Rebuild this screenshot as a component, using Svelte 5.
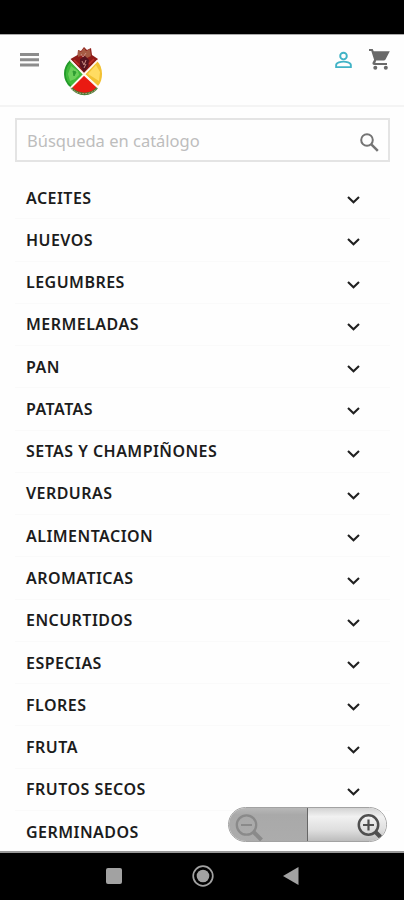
<script>
  const categories = [
    "ACEITES",
    "HUEVOS",
    "LEGUMBRES",
    "MERMELADAS",
    "PAN",
    "PATATAS",
    "SETAS Y CHAMPIÑONES",
    "VERDURAS",
    "ALIMENTACION",
    "AROMATICAS",
    "ENCURTIDOS",
    "ESPECIAS",
    "FLORES",
    "FRUTA",
    "FRUTOS SECOS",
    "GERMINADOS",
  ];
  let query = "";
</script>

<div class="phone">
  <div class="status-bar"></div>

  <header>
    <button class="menu" aria-label="Menú">
      <svg width="19" height="14" viewBox="0 0 19 14" fill="#8c8c8c">
        <path d="M0 0h19v3H0zM0 5.3h19v3H0zM0 10.6h19v3H0z" />
      </svg>
    </button>
    <svg class="logo" width="40" height="50" viewBox="0 0 40 50">
      <path d="M6.500 14C-1.500 21-1.500 33 7 40L19.500 27z" fill="#3fb93a" />
      <path d="M6.500 14C-1 21-1 33 7 39.500" fill="none" stroke="#229a2a" stroke-width="1.800" />
      <path d="M7 19l7 5 1 4-4 4-5 2-2-7z" fill="#7fd968" opacity=".7" />
      <path d="M9 24l3 1-2 4zM12 20l3 4" fill="#2e9c32" stroke="#2e9c32" />
      <path d="M33 14C39.500 20 39.500 33 34 39L21 27z" fill="#f2c132" />
      <path d="M32 18l4 7-1 9-11-7z" fill="#ffdc62" />
      <path d="M6.500 41L20 27.500 34 41C28 50.500 13 50.500 6.500 41z" fill="#3f7c31" />
      <path d="M8 40L20 28l12.500 12C27 47.500 14 47.500 8 40z" fill="#ea1a12" />
      <path d="M7.500 41.500C14 48.500 27 48.500 33 41.500" fill="none" stroke="#dba38d" stroke-width=".8" stroke-dasharray="2 1" />
      <path d="M6.500 12l7-4 .5-5 3 1 3-4 3 3 4-2 1 7 6 4-14 14z" fill="#8f1b18" />
      <path d="M14 3l3 2 3-4 2 3 4-2 1 7-4 2-4-3-5 2z" fill="#a65b43" />
      <path d="M16 12l5-3 4 4-1 7-4 5-4-6z" fill="#571420" />
      <path d="M18 14l2 4 2-5M20 21l2-4M17 7l2 3 3-4" stroke="#c98b82" fill="none" />
      <path d="M10 13l5 5M30 12l-5 5" stroke="#be302a" stroke-width="1.500" />
      <path d="M6.500 13.500L20 27.500l13.500-14M7 40.500l13-13 14 13" stroke="#fff6ee" stroke-width="1.800" fill="none" />
    </svg>
    <div class="tools">
      <svg width="17" height="18" viewBox="0 0 18 18" fill="none" stroke="#41b3c6" stroke-width="2">
        <circle cx="9" cy="4.800" r="3.500" />
        <path d="M1.200 16.600v-2.100c0-2.700 5.200-3.800 7.800-3.800s7.800 1.100 7.800 3.800v2.100z" />
      </svg>
      <svg width="21" height="21" viewBox="0 0 21 21" fill="#696969">
        <path d="M0 0h3.700l1 2.200h16.100l-4.300 8.300c-.4.700-1 1-1.700 1H7.200L6.300 14H18v2H5.500c-1.700 0-2.500-1.500-1.800-2.800l1.400-2.500L2.300 2H0z" />
        <circle cx="6.300" cy="18.800" r="2" />
        <circle cx="16.800" cy="18.800" r="2" />
      </svg>
    </div>
  </header>

  <main>
    <form class="search">
      <input placeholder="Búsqueda en catálogo" aria-label="Buscar" bind:value={query} />
      <svg width="19" height="19" viewBox="0 0 19 19" fill="none" stroke="#747474">
        <circle cx="7" cy="7" r="5.800" stroke-width="2" />
        <path d="M11.300 11.300l6.500 6.500" stroke-width="2.500" />
      </svg>
    </form>

    <ul>
      {#each categories as category}
        <li>
          <span>{category}</span>
          <svg width="13" height="8" viewBox="0 0 13 8" fill="none" stroke="#202020" stroke-width="2.100">
            <path d="M1 1l5.500 5.200L12 1" />
          </svg>
        </li>
      {/each}
    </ul>
  </main>

  <div class="zoom">
    <button class="out" aria-label="Alejar">
      <svg width="29" height="28" viewBox="0 0 29 28" fill="none" stroke="#8a8a8a">
        <circle cx="11.500" cy="11" r="9.700" stroke-width="2.300" />
        <path d="M6 11h11" stroke-width="2.200" />
        <path d="M18.500 18l8 8" stroke-width="4" />
      </svg>
    </button>
    <button class="in" aria-label="Acercar">
      <svg width="29" height="28" viewBox="0 0 29 28" fill="none" stroke="#4f4f4f">
        <circle cx="11.500" cy="11" r="9.700" stroke-width="2.500" />
        <path d="M6 11h11M11.500 5.500v11" stroke-width="2.200" />
        <path d="M18.500 18l6 6" stroke-width="4" />
      </svg>
    </button>
  </div>

  <nav>
    <svg width="16" height="16" viewBox="0 0 16 16"><rect width="16" height="16" rx="2" fill="#a2a2a2" /></svg>
    <svg width="22" height="22" viewBox="0 0 22 22">
      <circle cx="11" cy="11" r="9.800" fill="none" stroke="#a2a2a2" stroke-width="1.700" />
      <circle cx="11" cy="11" r="6.300" fill="#a2a2a2" />
    </svg>
    <svg width="16" height="18" viewBox="0 0 16 18"><path d="M0 9L15.500 0v18z" fill="#a2a2a2" /></svg>
  </nav>
</div>

<style>
  :global(body) {
    background: #fefefe;
  }
  .phone {
    position: relative;
    display: flex;
    flex-direction: column;
    box-sizing: border-box;
    width: 404px;
    height: 900px;
    overflow: hidden;
    background: #fefefe;
    font-family: "Noto Sans", sans-serif;
  }
  svg {
    display: block;
    flex: none;
  }
  button {
    padding: 0;
    border: 0;
    background: none;
  }
  .status-bar {
    flex: none;
    height: 34px;
    background: #000;
  }
  header {
    display: flex;
    flex: none;
    align-items: flex-start;
    box-sizing: border-box;
    height: 73px;
    padding: 12px 14px 0 20px;
    border-top: 1px solid #aaa;
    border-bottom: 2px solid #f4f4f4;
  }
  .menu {
    margin-top: 6px;
  }
  .logo {
    margin: 0 0 0 25px;
  }
  .tools {
    display: flex;
    gap: 17px;
    margin: 2px 0 0 auto;
  }
  .tools svg:first-child {
    margin-top: 2px;
  }
  main {
    flex: 1;
    min-height: 0;
    overflow: hidden;
    padding: 11px 14px 0 15px;
  }
  .search {
    display: flex;
    align-items: center;
    box-sizing: border-box;
    height: 44px;
    padding: 0 9px 0 10px;
    border: 2px solid #e4e4e4;
  }
  input {
    flex: 1;
    min-width: 0;
    padding: 0;
    border: 0;
    outline: 0;
    background: none;
    color: #555;
    font: 16.500px "Noto Sans", sans-serif;
  }
  input::placeholder {
    color: #bdbdbd;
    opacity: 1;
  }
  .search svg {
    margin-top: 5px;
  }
  ul {
    margin: 15px 0 0;
    padding: 0;
    list-style: none;
  }
  li {
    display: flex;
    align-items: center;
    justify-content: space-between;
    box-sizing: border-box;
    height: 42.270px;
    padding: 0 30px 0 11px;
    border-bottom: 1px solid #fafafa;
    color: #1c1c1c;
    font-size: 16px;
    font-weight: 600;
    letter-spacing: 0.460px;
  }
  li svg {
    margin-top: 5px;
  }
  .zoom {
    position: absolute;
    top: 807px;
    left: 228px;
    display: grid;
    grid-template-columns: 79px 1fr;
    box-sizing: border-box;
    width: 159px;
    height: 35px;
    overflow: hidden;
    border: 1px solid #a2a2a2;
    border-radius: 18px;
  }
  .zoom button {
    display: flex;
    align-items: flex-start;
    padding-top: 6px;
  }
  .zoom .out {
    padding-left: 6px;
    border-right: 1px solid #666;
    background: linear-gradient(#b8b8b8, #a9a9a9 20%, #acacac);
  }
  .zoom .in {
    justify-content: flex-end;
    background: linear-gradient(#d2d2d2, #f1f1f1 25%, #dedede 65%, #b9b9b9);
  }
  nav {
    display: flex;
    flex: none;
    align-items: center;
    justify-content: space-between;
    box-sizing: border-box;
    height: 49px;
    padding: 0 105px 1px 106px;
    border-top: 2px solid #999;
    background: #000;
  }
</style>
